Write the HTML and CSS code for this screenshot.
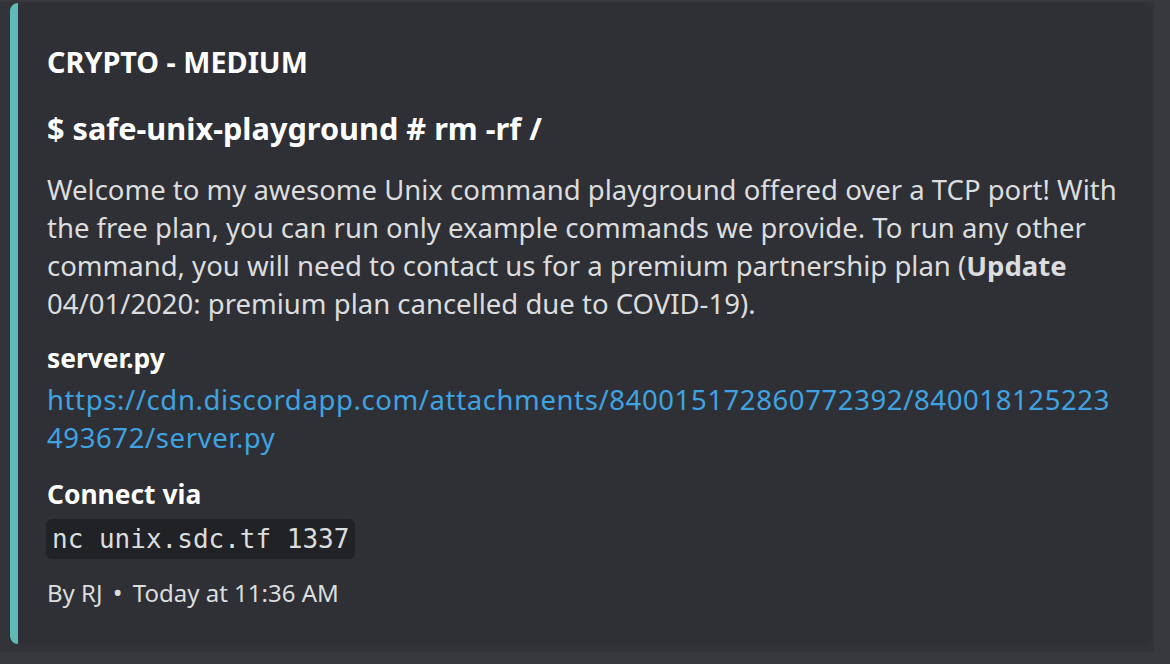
FILE: index.html
```html
<!DOCTYPE html>
<html lang="en">
<head>
<meta charset="utf-8">
<title>Embed</title>
<link rel="stylesheet" href="styles.css">
</head>
<body>
<div class="panel">
  <article class="embed">
    <div class="embed-body">
      <div class="author">CRYPTO - MEDIUM</div>
      <div class="title">$ safe-unix-playground # rm -rf /</div>
      <div class="description">Welcome to my awesome Unix command playground offered over a TCP port! With the free plan, you can run only example commands we provide. To run any other command, you will need to contact us for a premium partnership plan (<strong>Update</strong> 04/01/2020: premium plan cancelled due to COVID-19).</div>
      <div class="field">
        <div class="field-name">server.py</div>
        <div class="field-value"><a class="link" href="#">https://cdn.discordapp.com/attachments/840015172860772392/840018125223493672/server.py</a></div>
      </div>
      <div class="field field-connect">
        <div class="field-name">Connect via</div>
        <div class="field-value"><code class="code">nc unix.sdc.tf 1337</code></div>
      </div>
      <div class="footer">By RJ <span class="sep">•</span> Today at 11:36 AM</div>
    </div>
  </article>
</div>
</body>
</html>
```

FILE: styles.css
```css
html, body {
  margin: 0;
  padding: 0;
}
body {
  background: #38393e;
  width: 1170px;
  height: 664px;
  overflow: hidden;
  font-family: "Noto Sans", "Open Sans", sans-serif;
}
.panel {
  margin-top: 2px;
  width: 1154px;
  height: 650px;
  background: #323338;
  padding: 1px 0 0 10px;
  box-sizing: border-box;
}
.embed {
  width: 1142px;
  height: 641px;
  background: #2f3035;
  border-left: 8px solid #5fbab7;
  border-radius: 8px;
  box-sizing: border-box;
}
.embed-body {
  padding: 41px 0 0 29px;
  width: 1102px;
}
.author {
  color: #ffffff;
  font-weight: 700;
  font-size: 28.8px;
  line-height: 36px;
}
.title {
  margin-top: 28px;
  color: #ffffff;
  font-weight: 700;
  font-size: 30.7px;
  line-height: 40px;
}
.description {
  margin-top: 23px;
  color: #dcddde;
  font-size: 27.5px;
  line-height: 38px;
  width: 1076px;
}
.description strong {
  font-weight: 700;
}
.field {
  margin-top: 17px;
}
.field-name {
  color: #ffffff;
  font-weight: 700;
  font-size: 26.4px;
  line-height: 36px;
}
.field-value {
  margin-top: 5px;
  font-size: 27.5px;
  line-height: 38px;
  width: 1074px;
}
.link {
  color: #3fa3e2;
  text-decoration: none;
  word-break: break-all;
  letter-spacing: 0.6px;
}
.field-connect {
  margin-top: 19px;
}
.field-connect .field-value {
  margin-top: 6px;
  line-height: 40px;
}
.code {
  display: inline-block;
  background: #202226;
  color: #dcddde;
  font-family: "DejaVu Sans Mono", "Liberation Mono", monospace;
  font-size: 26px;
  line-height: 40px;
  padding: 0 6px;
  border-radius: 6px;
  margin-left: -1px;
  letter-spacing: 0;
}
.footer {
  margin-top: 17px;
  color: #dcddde;
  font-size: 24px;
  line-height: 32px;
}
.sep {
  margin: 0 4px;
  font-size: 26px;
}
```
